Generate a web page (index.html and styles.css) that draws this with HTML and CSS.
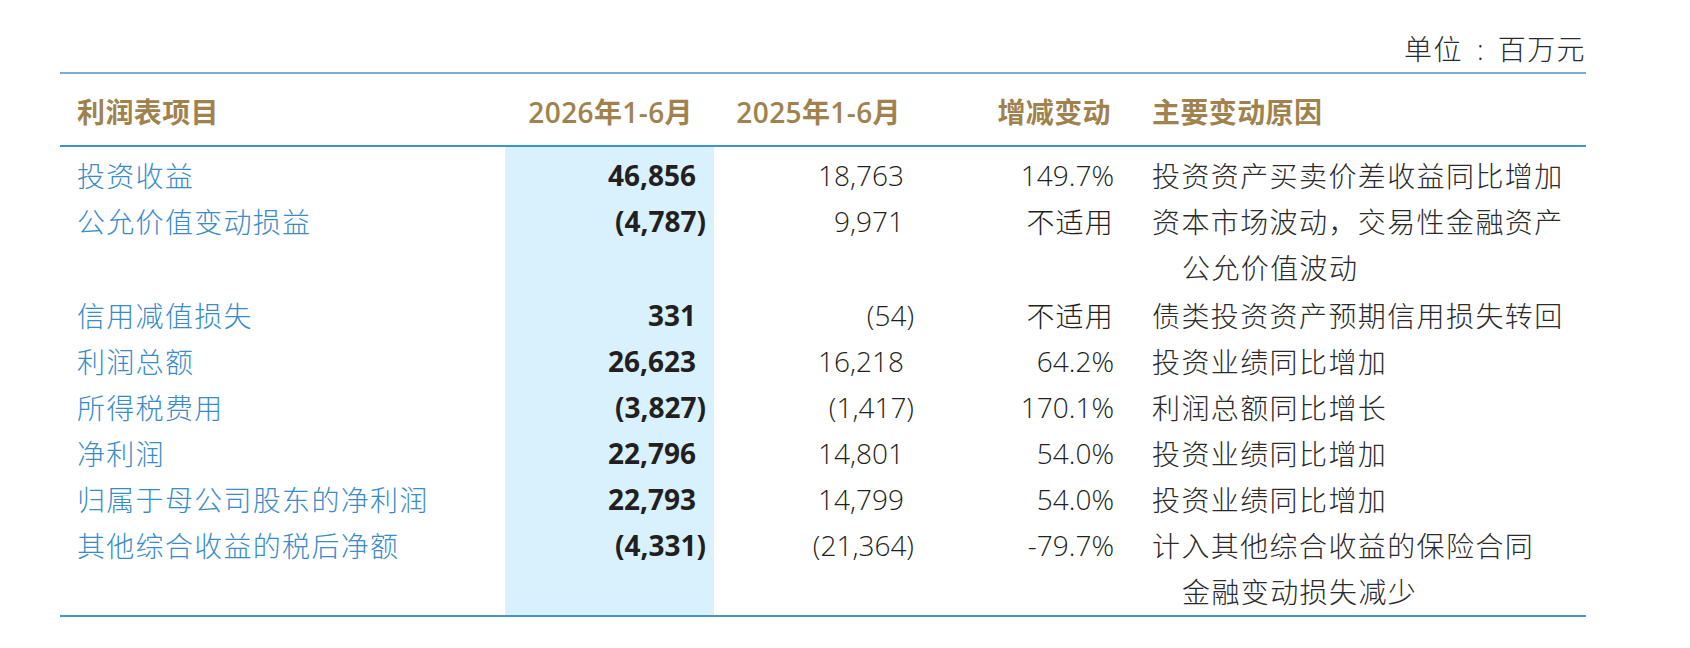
FILE: index.html
```html
<!DOCTYPE html>
<html lang="zh-CN">
<head>
<meta charset="utf-8">
<title>利润表项目</title>
<link rel="stylesheet" href="styles.css">
</head>
<body>
<div class="page">
  <div class="unit">单位<span class="colon">:</span>百万元</div>
  <div class="table">
    <div class="row head">
      <div class="c label">利润表项目</div>
      <div class="c n1">2026年1-6月</div>
      <div class="c n2">2025年1-6月</div>
      <div class="c n3">增减变动</div>
      <div class="c reason">主要变动原因</div>
    </div>
    <div class="body">
      <div class="row">
        <div class="c label">投资收益</div>
        <div class="c n1">46,856</div>
        <div class="c n2">18,763</div>
        <div class="c n3">149.7%</div>
        <div class="c reason">投资资产买卖价差收益同比增加</div>
      </div>
      <div class="row multi">
        <div class="c label">公允价值变动损益</div>
        <div class="c n1 neg">(4,787)</div>
        <div class="c n2">9,971</div>
        <div class="c n3 cjk">不适用</div>
        <div class="c reason">资本市场波动，交易性金融资产<br>公允价值波动</div>
      </div>
      <div class="row">
        <div class="c label">信用减值损失</div>
        <div class="c n1">331</div>
        <div class="c n2 neg">(54)</div>
        <div class="c n3 cjk">不适用</div>
        <div class="c reason">债类投资资产预期信用损失转回</div>
      </div>
      <div class="row">
        <div class="c label">利润总额</div>
        <div class="c n1">26,623</div>
        <div class="c n2">16,218</div>
        <div class="c n3">64.2%</div>
        <div class="c reason">投资业绩同比增加</div>
      </div>
      <div class="row">
        <div class="c label">所得税费用</div>
        <div class="c n1 neg">(3,827)</div>
        <div class="c n2 neg">(1,417)</div>
        <div class="c n3">170.1%</div>
        <div class="c reason">利润总额同比增长</div>
      </div>
      <div class="row">
        <div class="c label">净利润</div>
        <div class="c n1">22,796</div>
        <div class="c n2">14,801</div>
        <div class="c n3">54.0%</div>
        <div class="c reason">投资业绩同比增加</div>
      </div>
      <div class="row">
        <div class="c label">归属于母公司股东的净利润</div>
        <div class="c n1">22,793</div>
        <div class="c n2">14,799</div>
        <div class="c n3">54.0%</div>
        <div class="c reason">投资业绩同比增加</div>
      </div>
      <div class="row multi last">
        <div class="c label">其他综合收益的税后净额</div>
        <div class="c n1 neg">(4,331)</div>
        <div class="c n2 neg">(21,364)</div>
        <div class="c n3">-79.7%</div>
        <div class="c reason">计入其他综合收益的保险合同<br>金融变动损失减少</div>
      </div>
    </div>
  </div>
</div>
</body>
</html>
```

FILE: styles.css
```css
html, body {
  margin: 0;
  padding: 0;
  background: #ffffff;
}

body {
  width: 1690px;
  font-family: "Open Sans", "Noto Sans CJK SC", sans-serif;
  font-size: 28px;
  color: #231f20;
}

.page {
  width: 1526px;
  padding: 25px 0 0 60px;
}

.unit {
  text-align: right;
  line-height: 46px;
  height: 46px;
  font-family: "Noto Sans CJK SC", sans-serif;
  font-weight: 300;
  letter-spacing: 1.4px;
  color: #2b2b2b;
}

.unit .colon {
  display: inline-block;
  width: 35px;
  text-align: center;
  letter-spacing: 0;
  font-family: "Open Sans", sans-serif;
}

.table {
  margin-top: 1px;
  border-top: 2px solid #7eaad4;
  border-bottom: 2px solid #4794be;
}

.row {
  display: grid;
  grid-template-columns: 445px 209px 208px 210px 454px;
  line-height: 46px;
}

.c {
  white-space: nowrap;
}

.head {
  padding: 15px 0 10px;
  border-bottom: 2px solid #3b93c8;
  color: #a0824f;
  font-weight: 600;
  letter-spacing: 0.4px;
}

.body {
  padding: 5px 0 0;
  background: linear-gradient(to right,
    transparent 445px, #d9f1fd 445px, #d9f1fd 654px, transparent 654px);
}

.multi {
  padding-bottom: 2px;
}

.multi.last {
  padding-bottom: 1px;
}

.label {
  padding-left: 17px;
}

.body .label {
  font-family: "Noto Sans CJK SC", sans-serif;
  font-weight: 300;
  letter-spacing: 1.3px;
  color: #3a8cc9;
}

.n1, .n2, .n3 {
  text-align: right;
  padding-right: 18px;
}

.head .n1, .head .n2, .head .n3 {
  padding-right: 21px;
}

.body .n1 {
  font-weight: 700;
}

.body .n2, .body .n3 {
  font-weight: 350;
}

.body .neg {
  padding-right: 8px;
}

.body .cjk {
  font-family: "Noto Sans CJK SC", sans-serif;
  font-weight: 300;
  letter-spacing: 1.2px;
}

.reason {
  padding-left: 20px;
}

.body .reason {
  font-family: "Noto Sans CJK SC", sans-serif;
  font-weight: 300;
  letter-spacing: 1.4px;
  color: #2b2b2b;
  padding-left: 50px;
  text-indent: -30px;
}
```
